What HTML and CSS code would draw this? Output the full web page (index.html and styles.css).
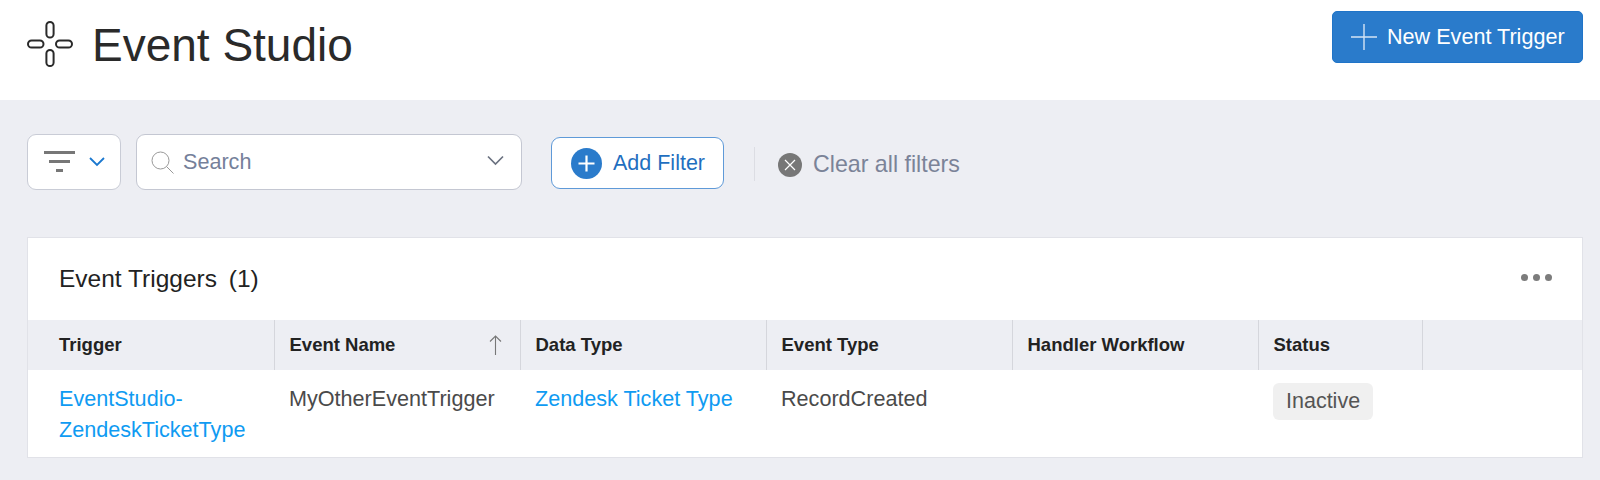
FILE: index.html
```html
<!DOCTYPE html>
<html lang="en">
<head>
<meta charset="utf-8">
<title>Event Studio</title>
<link rel="stylesheet" href="styles.css">
</head>
<body>
<header class="topbar">
  <div class="brand">
    <svg class="brand-icon" width="46" height="46" viewBox="0 0 46 46" fill="none" stroke="#2a2a2a" stroke-width="2">
      <rect x="19.4" y="1" width="7.2" height="15.5" rx="3.6"/>
      <rect x="19.4" y="29" width="7.2" height="16" rx="3.6"/>
      <rect x="1" y="19.4" width="15.5" height="7.2" rx="3.6"/>
      <rect x="29" y="19.4" width="16" height="7.2" rx="3.6"/>
    </svg>
    <h1 class="title">Event Studio</h1>
  </div>
  <button class="new-btn">
    <svg width="26" height="26" viewBox="0 0 26 26" stroke="#fff" stroke-width="1.4" opacity=".8"><path d="M13 0v26M0 13h26"/></svg>
    <span>New Event Trigger</span>
  </button>
</header>
<main class="content">
  <div class="toolbar">
    <div class="filter-btn">
      <svg width="32" height="22" viewBox="0 0 32 22" fill="#777"><rect x="0" y="0" width="31" height="3"/><rect x="5" y="9" width="21" height="3"/><rect x="12" y="18" width="7" height="3"/></svg>
      <svg width="16" height="10" viewBox="0 0 16 10" fill="none" stroke="#1b78cf" stroke-width="1.8"><path d="M1 1l7 7 7-7"/></svg>
    </div>
    <div class="search">
      <svg width="23" height="23" viewBox="0 0 23 23" fill="none" stroke="#999" stroke-width="1"><circle cx="9.5" cy="9.5" r="8.5"/><path d="M15.5 15.5l7 7"/></svg>
      <span class="search-text">Search</span>
      <svg class="search-caret" width="17" height="11" viewBox="0 0 17 11" fill="none" stroke="#6b7280" stroke-width="1.7"><path d="M1 1.5l7.5 7.5 7.5-7.5"/></svg>
    </div>
    <button class="add-btn">
      <svg width="31" height="31" viewBox="0 0 31 31"><circle cx="15.5" cy="15.5" r="15.5" fill="#2a7bcb"/><path d="M15.5 7.5v16M7.5 15.5h16" stroke="#fff" stroke-width="2.2"/></svg>
      <span>Add Filter</span>
    </button>
    <div class="divider"></div>
    <div class="clear">
      <svg width="24" height="24" viewBox="0 0 24 24"><circle cx="12" cy="12" r="12" fill="#777"/><path d="M7 7l10 10M17 7L7 17" stroke="#fff" stroke-width="1.2"/></svg>
      <span>Clear all filters</span>
    </div>
  </div>
  <section class="card">
    <div class="card-head">
      <h2 class="card-title">Event Triggers <span class="count">(1)</span></h2>
      <div class="dots"><i></i><i></i><i></i></div>
    </div>
    <table class="grid">
      <colgroup><col class="c1"><col class="c2"><col class="c2"><col class="c2"><col class="c2"><col class="c3"><col></colgroup>
      <thead>
        <tr>
          <th>Trigger</th>
          <th><div class="th-sort">Event Name<svg width="13" height="20" viewBox="0 0 13 20" fill="none" stroke="#777" stroke-width="1.1"><path d="M6.5 20V1M1 6.5l5.5-5.5 5.5 5.5"/></svg></div></th>
          <th>Data Type</th>
          <th>Event Type</th>
          <th>Handler Workflow</th>
          <th>Status</th>
          <th></th>
        </tr>
      </thead>
      <tbody>
        <tr>
          <td><a href="#">EventStudio-<br>ZendeskTicketType</a></td>
          <td>MyOtherEventTrigger</td>
          <td><a href="#">Zendesk Ticket Type</a></td>
          <td>RecordCreated</td>
          <td></td>
          <td><span class="badge">Inactive</span></td>
          <td></td>
        </tr>
      </tbody>
    </table>
  </section>
</main>
</body>
</html>
```
FILE: styles.css
```css
* { box-sizing: border-box; }
html, body { margin: 0; height: 100%; }
body { font-family: "Liberation Sans", Arial, sans-serif; background: #edeef3; color: #333; overflow: hidden; }
.topbar { height: 100px; background: #fff; display: flex; justify-content: space-between; align-items: flex-start; padding: 11px 17px 0 27px; }
.brand { display: flex; align-items: center; gap: 19px; padding-top: 9px; }
.brand-icon { display: block; }
.title { margin: 2px 0 0; font-size: 46px; font-weight: 400; line-height: 46px; color: #2a2a2a; }
.new-btn { width: 251px; height: 52px; background: #2a7bcb; border: 1px solid #1f74c8; border-radius: 5px; color: #fff; font: 21.6px "Liberation Sans", Arial, sans-serif; display: flex; align-items: center; gap: 10px; padding: 0 0 0 18px; }
.content { padding: 34px 17px 0 27px; }
.toolbar { display: flex; align-items: flex-start; height: 56px; }
.filter-btn { width: 94px; height: 56px; background: #fff; border: 1px solid #c9ccd6; border-radius: 9px; display: flex; align-items: center; gap: 13px; padding-left: 16px; }
.search { width: 386px; height: 56px; margin-left: 15px; background: #fff; border: 1px solid #c4c7d2; border-radius: 9px; display: flex; align-items: center; padding: 0 17px 0 14px; }
.search-text { margin-left: 9px; font-size: 21.6px; color: #75809a; flex: 1; }
.search-caret { margin-top: -4px; }
.add-btn { width: 173px; height: 52px; margin: 3px 0 0 29px; background: #fff; border: 1px solid #5f9ad8; border-radius: 9px; display: flex; align-items: center; gap: 11px; padding: 0 0 0 19px; font: 21.5px "Liberation Sans", Arial, sans-serif; color: #1f6fc0; }
.divider { width: 1px; height: 34px; margin: 13px 0 0 30px; background: #dcdde3; }
.clear { display: flex; align-items: center; gap: 11px; margin: 17px 0 0 23px; font-size: 23.2px; color: #7b8398; }
.card { margin-top: 47px; width: 1556px; height: 221px; background: #fff; border: 1px solid #e1e2e8; }
.card-head { height: 82px; display: flex; justify-content: space-between; align-items: center; padding: 0 30px 0 31px; }
.card-title { margin: 0; font-size: 24.5px; font-weight: 400; color: #222; }
.count { margin-left: 5px; }
.dots { display: flex; gap: 5px; margin-bottom: 4px; }
.dots i { width: 7px; height: 7px; border-radius: 50%; background: #7c7c7c; }
.grid { width: 100%; table-layout: fixed; border-collapse: collapse; }
.c1 { width: 246px; }
.c2 { width: 246px; }
.c3 { width: 164px; }
.grid th { height: 50px; padding: 0 18px 0 15px; background: #edeef3; border-right: 1px solid #d5d6dc; text-align: left; font-size: 18.5px; font-weight: 700; color: #222; }
.grid th:first-child, .grid td:first-child { padding-left: 31px; }
.grid th:last-child { border-right: 0; }
.th-sort { display: flex; justify-content: space-between; align-items: center; }
.grid td { vertical-align: top; padding: 13px 8px 10px 15px; font-size: 21.6px; line-height: 31px; color: #4a4a4a; white-space: nowrap; }
.grid a { color: #0f9bf2; text-decoration: none; }
.badge { display: inline-block; height: 37px; line-height: 37px; padding: 0 13px; background: #f0f0f0; border-radius: 6px; color: #555; font-size: 21.5px; }
```
